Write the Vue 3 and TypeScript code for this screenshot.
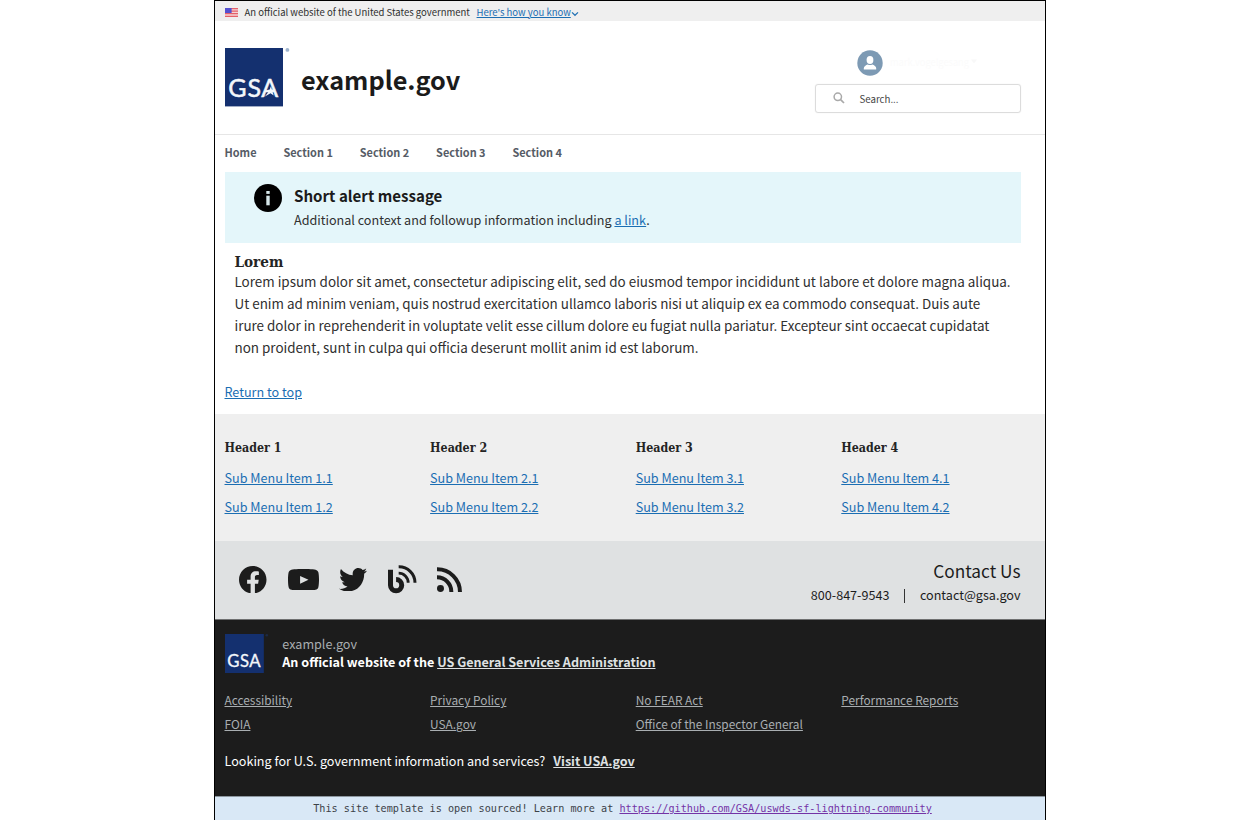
<script setup lang="ts">
interface MenuColumn {
  title: string
  items: string[]
}

const nav: string[] = ['Home', 'Section 1', 'Section 2', 'Section 3', 'Section 4']

const columns: MenuColumn[] = [1, 2, 3, 4].map((n) => ({
  title: `Header ${n}`,
  items: [`Sub Menu Item ${n}.1`, `Sub Menu Item ${n}.2`],
}))

const required: string[][] = [
  ['Accessibility', 'FOIA'],
  ['Privacy Policy', 'USA.gov'],
  ['No FEAR Act', 'Office of the Inspector General'],
  ['Performance Reports'],
]
</script>

<template>
  <div class="page">
    <div class="banner">
      <svg class="flag" viewBox="0 0 13 9">
        <rect width="13" height="9" fill="#f6d3d5" />
        <path d="M0 .7h13M0 3.2h13M0 5.7h13M0 8.3h13" stroke="#e4606a" stroke-width="1.3" />
        <rect width="6.6" height="5" fill="#5450d0" />
      </svg>
      <span>An official website of the United States government</span>
      <a class="know">Here's how you know</a>
      <svg class="chev" viewBox="0 0 8 6"><path d="M1 1.4 4 4.3 7 1.4" fill="none" stroke="#2272b4" stroke-width="1.2" /></svg>
    </div>

    <header class="header">
      <svg class="logo" viewBox="0 0 66 59">
        <rect width="58" height="58.4" fill="#14306f" />
        <text x="3.2" y="49" class="gsa">G</text>
        <text x="22.4" y="49" class="gsa">S</text>
        <text x="36.2" y="49" class="gsa">A</text>
        <path d="M45.900 38.200l1 3.400h3.600l-3 2.200 1.200 3.600-3.200-2.200-5.600 3.400 3.800-5-1.300-1.600 2.300-.4z" fill="#f4f7fb" />
        <circle cx="62.4" cy="1.9" r="1.9" fill="#9fb4cd" />
      </svg>
      <h1>example.gov</h1>
      <div class="tools">
        <div class="user">
          <svg class="avatar" viewBox="0 0 26 26">
            <circle cx="13" cy="13" r="12.7" fill="#7d9ab4" />
            <ellipse cx="13" cy="10" rx="3.4" ry="4" fill="#fff" />
            <path d="M6.8 19.4v-1.2c0-2.2 2-3 4-3.8.9.9 3.5.9 4.4 0 2 .8 4 1.6 4 3.8v1.2z" fill="#fff" />
          </svg>
          <span class="name">mark.vogelgesang</span>
          <svg class="caret" viewBox="0 0 8 5"><path d="M1 .5h6L4 4.5z" fill="#f8f8f8" /></svg>
        </div>
        <div class="search">
          <svg viewBox="0 0 12 12"><circle cx="4.8" cy="4.8" r="3.7" fill="none" stroke="#a9a9a9" stroke-width="1.5" /><path d="M7.6 7.6 11 11" stroke="#a9a9a9" stroke-width="1.7" /></svg>
          <span>Search...</span>
        </div>
      </div>
    </header>

    <nav class="nav"><a v-for="n in nav" :key="n">{{ n }}</a></nav>

    <section class="alert">
      <svg class="info" viewBox="0 0 28 28">
        <circle cx="14" cy="14" r="14" fill="#000" />
        <rect x="12.3" y="7" width="3.4" height="2.9" fill="#d5e6e9" />
        <rect x="12.3" y="11.7" width="3.4" height="9.6" fill="#d5e6e9" />
      </svg>
      <div>
        <h2>Short alert message</h2>
        <p>Additional context and followup information including <a class="link">a link</a>.</p>
      </div>
    </section>

    <main class="main">
      <h3>Lorem</h3>
      <p>
        Lorem ipsum dolor sit amet, consectetur adipiscing elit, sed do eiusmod tempor incididunt ut labore et dolore magna aliqua.<br />
        Ut enim ad minim veniam, quis nostrud exercitation ullamco laboris nisi ut aliquip ex ea commodo consequat. Duis aute<br />
        irure dolor in reprehenderit in voluptate velit esse cillum dolore eu fugiat nulla pariatur. Excepteur sint occaecat cupidatat<br />
        non proident, sunt in culpa qui officia deserunt mollit anim id est laborum.
      </p>
    </main>
    <div class="return"><a class="link">Return to top</a></div>

    <section class="menu">
      <div v-for="c in columns" :key="c.title">
        <h4>{{ c.title }}</h4>
        <div v-for="i in c.items" :key="i" class="item"><a class="link">{{ i }}</a></div>
      </div>
    </section>

    <section class="social">
      <div class="icons">
        <svg class="fb" viewBox="8 8 496 496"><path d="M504 256C504 119 393 8 256 8S8 119 8 256c0 123.78 90.69 226.38 209.25 245V327.69h-63V256h63v-54.64c0-62.15 37-96.48 93.67-96.48 27.14 0 55.52 4.84 55.52 4.84v61h-31.28c-30.8 0-40.41 19.12-40.41 38.73V256h68.78l-11 71.69h-57.78V501C413.31 482.38 504 379.78 504 256z" /></svg>
        <svg class="yt" viewBox="15 64 546 384" preserveAspectRatio="none"><path d="M549.655 124.083c-6.281-23.65-24.787-42.276-48.284-48.597C458.781 64 288 64 288 64S117.22 64 74.629 75.486c-23.497 6.322-42.003 24.947-48.284 48.597-11.412 42.867-11.412 132.305-11.412 132.305s0 89.438 11.412 132.305c6.281 23.65 24.787 41.5 48.284 47.821C117.22 448 288 448 288 448s170.78 0 213.371-11.486c23.497-6.321 42.003-24.171 48.284-47.821 11.412-42.867 11.412-132.305 11.412-132.305s0-89.438-11.412-132.305zM228 326V187l148 69.500z" /></svg>
        <svg class="tw" viewBox="0 48 512 416" preserveAspectRatio="none"><path d="M459.37 151.716c.325 4.548.325 9.097.325 13.645 0 138.72-105.583 298.558-298.558 298.558-59.452 0-114.68-17.219-161.137-47.106 8.447.974 16.568 1.299 25.34 1.299 49.055 0 94.213-16.568 130.274-44.832-46.132-.975-84.792-31.188-98.112-72.772 6.498.974 12.995 1.624 19.818 1.624 9.421 0 18.843-1.3 27.614-3.573-48.081-9.747-84.143-51.98-84.143-102.985v-1.299c13.969 7.797 30.214 12.67 47.431 13.319-28.264-18.843-46.781-51.005-46.781-87.391 0-19.492 5.197-37.36 14.294-52.954 51.655 63.675 129.3 105.258 216.365 109.807-1.624-7.797-2.599-15.918-2.599-24.04 0-57.828 46.782-104.934 104.934-104.934 30.213 0 57.502 12.67 76.67 33.137 23.715-4.548 46.456-13.32 66.599-25.34-7.798 24.366-24.366 44.833-46.132 57.827 21.117-2.273 41.584-8.122 60.426-16.243-14.292 20.791-32.161 39.308-52.628 54.253z" /></svg>
        <svg class="blog" viewBox="535 61 87 87">
          <g fill="none" stroke="#1c1c1c">
            <path d="M535 82.500h7.500V121.500a16.800 16.800 0 1 0 16.800-16.800" stroke-width="15" />
            <path d="M567 85.500a28.500 28.500 0 0 1 28.500 28.500" stroke-width="8.500" />
            <path d="M567 66.500a48 48 0 0 1 49 48" stroke-width="9" />
          </g>
        </svg>
        <svg class="rss" viewBox="682 66 76 76">
          <circle cx="692.5" cy="130.5" r="10.5" />
          <g fill="none" stroke="#1c1c1c" stroke-width="12">
            <path d="M682 97a43 43 0 0 1 43 44" />
            <path d="M682 73a68 68 0 0 1 69 68" />
          </g>
        </svg>
      </div>
      <div class="contact">
        <div class="big">Contact Us</div>
        <div class="row"><span>800-847-9543</span><i></i><span>contact@gsa.gov</span></div>
      </div>
    </section>

    <footer class="footer">
      <div class="ident">
        <svg class="logo small" viewBox="0 0 66 59">
          <rect width="58" height="58.4" fill="#14306f" />
          <text x="3.2" y="49" class="gsa">G</text>
          <text x="22.4" y="49" class="gsa">S</text>
          <text x="36.2" y="49" class="gsa">A</text>
          <circle cx="62.4" cy="1.9" r="1.9" fill="#1d2a44" />
        </svg>
        <div>
          <div class="domain">example.gov</div>
          <div class="official">An official website of the <a>US General Services Administration</a></div>
        </div>
      </div>
      <div class="required">
        <div v-for="(col, k) in required" :key="k"><div v-for="i in col" :key="i"><a>{{ i }}</a></div></div>
      </div>
      <div class="looking">Looking for U.S. government information and services?<a>Visit USA.gov</a></div>
    </footer>

    <div class="open">This site template is open sourced! Learn more at <a>https://github.com/GSA/uswds-sf-lightning-community</a></div>
  </div>
</template>

<style>
body { background: #fff; }
</style>

<style scoped>
.page {
  box-sizing: border-box;
  width: 832px;
  height: 820px;
  margin-left: 214px;
  border: 1px solid #000;
  border-bottom: 0;
  overflow: hidden;
  display: flex;
  flex-direction: column;
  font-family: "Noto Sans CJK SC", "Open Sans", sans-serif;
  font-size: 12.6px;
  line-height: 18px;
  color: #303030;
  white-space: nowrap;
}
.page > * { flex: none; box-sizing: border-box; }
h1, h2, h3, h4, p { margin: 0; }
a { text-decoration: underline; text-decoration-thickness: 1px; text-underline-offset: 1px; }
.link { color: #1b6eb3; }

.banner { display: flex; height: 19.6px; padding: 1.6px 0 0 9.5px; background: #efefef; font-size: 9.5px; line-height: 19px; }
.flag { width: 13px; height: 9px; margin: 5px 7px 0 0; }
.know { margin-left: 6.7px; color: #1b6eb3; }
.chev { width: 8px; height: 6px; margin-top: 8px; }

.header { display: flex; height: 114px; padding-left: 9.5px; border-bottom: 1px solid #e6e6e6; }
.logo { width: 66px; height: 59px; margin-top: 27px; flex: none; }
.gsa { font: 25px "Lato", sans-serif; fill: #f4f7fb; stroke: #f4f7fb; stroke-width: .5px; }
h1 { margin: 43.9px 0 0 10.5px; font-size: 25.25px; line-height: 30px; font-weight: 700; color: #1b1b1b; }
.tools { width: 206px; margin: 29.4px 24px 0 auto; }
.user { display: flex; padding-left: 42px; height: 26px; }
.avatar { width: 26px; height: 26px; }
.name { margin: 4px 0 0 7px; width: 75px; font-size: 9.3px; line-height: 16px; color: #fbfbfb; }
.caret { width: 8px; height: 5px; margin: 9px 0 0 5px; }
.search { box-sizing: border-box; display: flex; height: 29px; margin-top: 8px; padding-left: 17px; border: 1px solid #dcdcdc; border-radius: 3px; box-shadow: 0 0 1px #ddd; font-size: 9.7px; line-height: 28px; color: #444; }
.search svg { width: 12px; height: 12px; margin: 7.5px 14.5px 0 0; }

.nav { display: flex; gap: 26.9px; height: 37.4px; padding: 9.8px 0 0 9.5px; font-size: 10.93px; line-height: 16.6px; font-weight: 700; color: #565c66; }
.nav a { text-decoration: none; }

.alert { display: flex; height: 71.4px; width: 796.5px; margin-left: 9.5px; background: #e4f6fa; }
.info { width: 28px; height: 28px; margin: 12.5px 12.5px 0 29px; }
h2 { margin: 12.9px 0 6.3px; font-size: 15.1px; line-height: 20px; color: #1b1b1b; }

.main { height: 139.4px; padding: 9.8px 0 0 19.5px; font-size: 13.43px; line-height: 22px; }
h3 { margin-bottom: -1.4px; font: 700 15.1px/18.4px "DejaVu Serif Condensed", "DejaVu Serif", serif; font-stretch: condensed; color: #242424; }
.return { height: 31px; padding-left: 9.5px; }

.menu { display: grid; grid-template-columns: repeat(4, 205.6px); height: 127.6px; padding: 26px 0 0 9.5px; background: #efefef; }
h4 { margin-bottom: 7px; font: 700 12.35px/16px "DejaVu Serif Condensed", "DejaVu Serif", serif; font-stretch: condensed; color: #242424; }
.item { line-height: 29px; }

.social { display: flex; justify-content: space-between; height: 77.6px; padding: 0 24.5px 0 24px; background: #dfe1e2; color: #1c1c1c; }
.icons { display: flex; align-items: flex-start; fill: #1c1c1c; }
.fb { width: 27.5px; height: 27.5px; margin-top: 24.5px; }
.yt { width: 31px; height: 21.5px; margin: 27.3px 0 0 21.2px; }
.tw { width: 28px; height: 23.5px; margin: 26.3px 0 0 20.8px; }
.blog { width: 29px; height: 29px; margin: 24px 0 0 20.5px; }
.rss { width: 25.3px; height: 25.3px; margin: 25.3px 0 0 20.3px; }
.contact { padding-top: 17.2px; text-align: right; }
.big { font-size: 17.25px; line-height: 24px; margin-bottom: 3.3px; }
.row { display: flex; }
.row i { width: 1px; height: 14px; margin: 3px 15px 0 14.5px; background: #333; }

.footer { height: 177px; padding: 14px 0 0 9.5px; border-top: 1px solid #6f7071; background: #1c1c1c; color: #fff; }
.ident { display: flex; height: 54.5px; }
.logo.small { width: 44.2px; height: 39.5px; margin: 0 13.6px 0 0; }
.ident > div { padding-top: 1.2px; line-height: 17.3px; }
.domain { color: #a9aeb1; }
.official { padding-top: .6px; font-weight: 700; }
.official a, .looking a { color: #dfe1e2; }
.required { display: grid; grid-template-columns: repeat(4, 205.6px); height: 63.1px; font-size: 11.88px; line-height: 24px; color: #a9aeb1; }
.looking a { margin-left: 8px; font-weight: 700; }

.open { height: 30px; padding-right: 15px; border-top: 1px solid #8d979f; background: #d9e8f6; text-align: center; font: 10.19px/23px "DejaVu Sans Mono", "Liberation Mono", monospace; color: #3c4248; }
.open a { color: #7433a6; }
</style>
